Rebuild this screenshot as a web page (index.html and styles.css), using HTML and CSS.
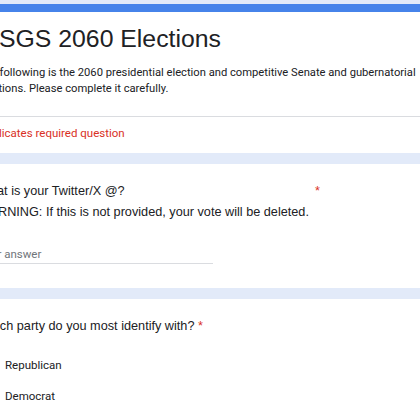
FILE: index.html
```html
<!DOCTYPE html>
<html>
<head>
<meta charset="utf-8">
<link rel="stylesheet" href="styles.css">
</head>
<body>
<div class="form">
  <div class="card header-card">
    <div class="header-main">
      <h1 class="title">SGS 2060 Elections</h1>
      <p class="desc">The following is the 2060 presidential election and competitive Senate and gubernatorial elections. Please complete it carefully.</p>
    </div>
    <div class="required-note">* Indicates required question</div>
  </div>

  <div class="card question-card">
    <div class="q-head">
      <span class="q-text">What is your Twitter/X @?</span>
      <span class="star">*</span>
    </div>
    <div class="q-text q-line">WARNING: If this is not provided, your vote will be deleted.</div>
    <div class="answer">Your answer</div>
  </div>

  <div class="card question-card">
    <div class="q-text">Which party do you most identify with? <span class="star">*</span></div>
    <div class="options">
      <div class="option"><span class="radio"></span><span>Republican</span></div>
      <div class="option"><span class="radio"></span><span>Democrat</span></div>
    </div>
  </div>
</div>
</body>
</html>
```

FILE: styles.css
```css
html, body {
  margin: 0;
  padding: 0;
  overflow: hidden;
  background: #e2eaf9;
}

.form {
  width: 518px;
  margin-left: -46px;
  padding-top: 4px;
  display: flex;
  flex-direction: column;
  gap: 11px;
}

.card {
  background: #ffffff;
  padding: 0 24px;
  box-sizing: border-box;
}

.header-card {
  border-top: 8px solid #4683ea;
}

.header-main {
  padding: 11px 24px 19px;
  border-bottom: 1px solid #dadce0;
  margin: 0 -24px;
}

.title {
  margin: 0 0 10px;
  padding-left: 21px;
  font-family: "Liberation Sans", Arial, sans-serif;
  font-weight: normal;
  font-size: 24.8px;
  line-height: 32px;
  color: #202124;
}

.desc {
  margin: 0;
  font-family: Roboto, "Noto Sans", sans-serif;
  font-size: 11.2px;
  line-height: 16px;
  color: #202124;
}

.required-note {
  padding: 8px 0 12px;
  font-family: Roboto, "Noto Sans", sans-serif;
  font-size: 11.5px;
  line-height: 16px;
  color: #d93025;
}

.question-card {
  padding-top: 17px;
  padding-bottom: 24px;
}

.q-text {
  font-family: "Liberation Sans", Arial, sans-serif;
  font-size: 12.7px;
  line-height: 21px;
  color: #202124;
}

.q-head {
  width: 342px;
  display: flex;
  justify-content: space-between;
  align-items: baseline;
}

.star {
  color: #d93025;
  font-family: "Liberation Sans", Arial, sans-serif;
  font-size: 12.7px;
}

.answer {
  margin-top: 23px;
  width: 50%;
  padding-bottom: 1px;
  border-bottom: 1px solid #dadce0;
  font-family: Roboto, "Noto Sans", sans-serif;
  font-size: 11.5px;
  line-height: 16px;
  color: #70757a;
}

.options {
  margin-top: 12px;
  display: flex;
  flex-direction: column;
}

.option {
  height: 31px;
  display: flex;
  align-items: center;
  gap: 11px;
  font-family: Roboto, "Noto Sans", sans-serif;
  font-size: 11.5px;
  color: #202124;
}

.radio {
  width: 16px;
  height: 16px;
  border: 2px solid #5f6368;
  border-radius: 50%;
  box-sizing: border-box;
  flex: none;
}
```
